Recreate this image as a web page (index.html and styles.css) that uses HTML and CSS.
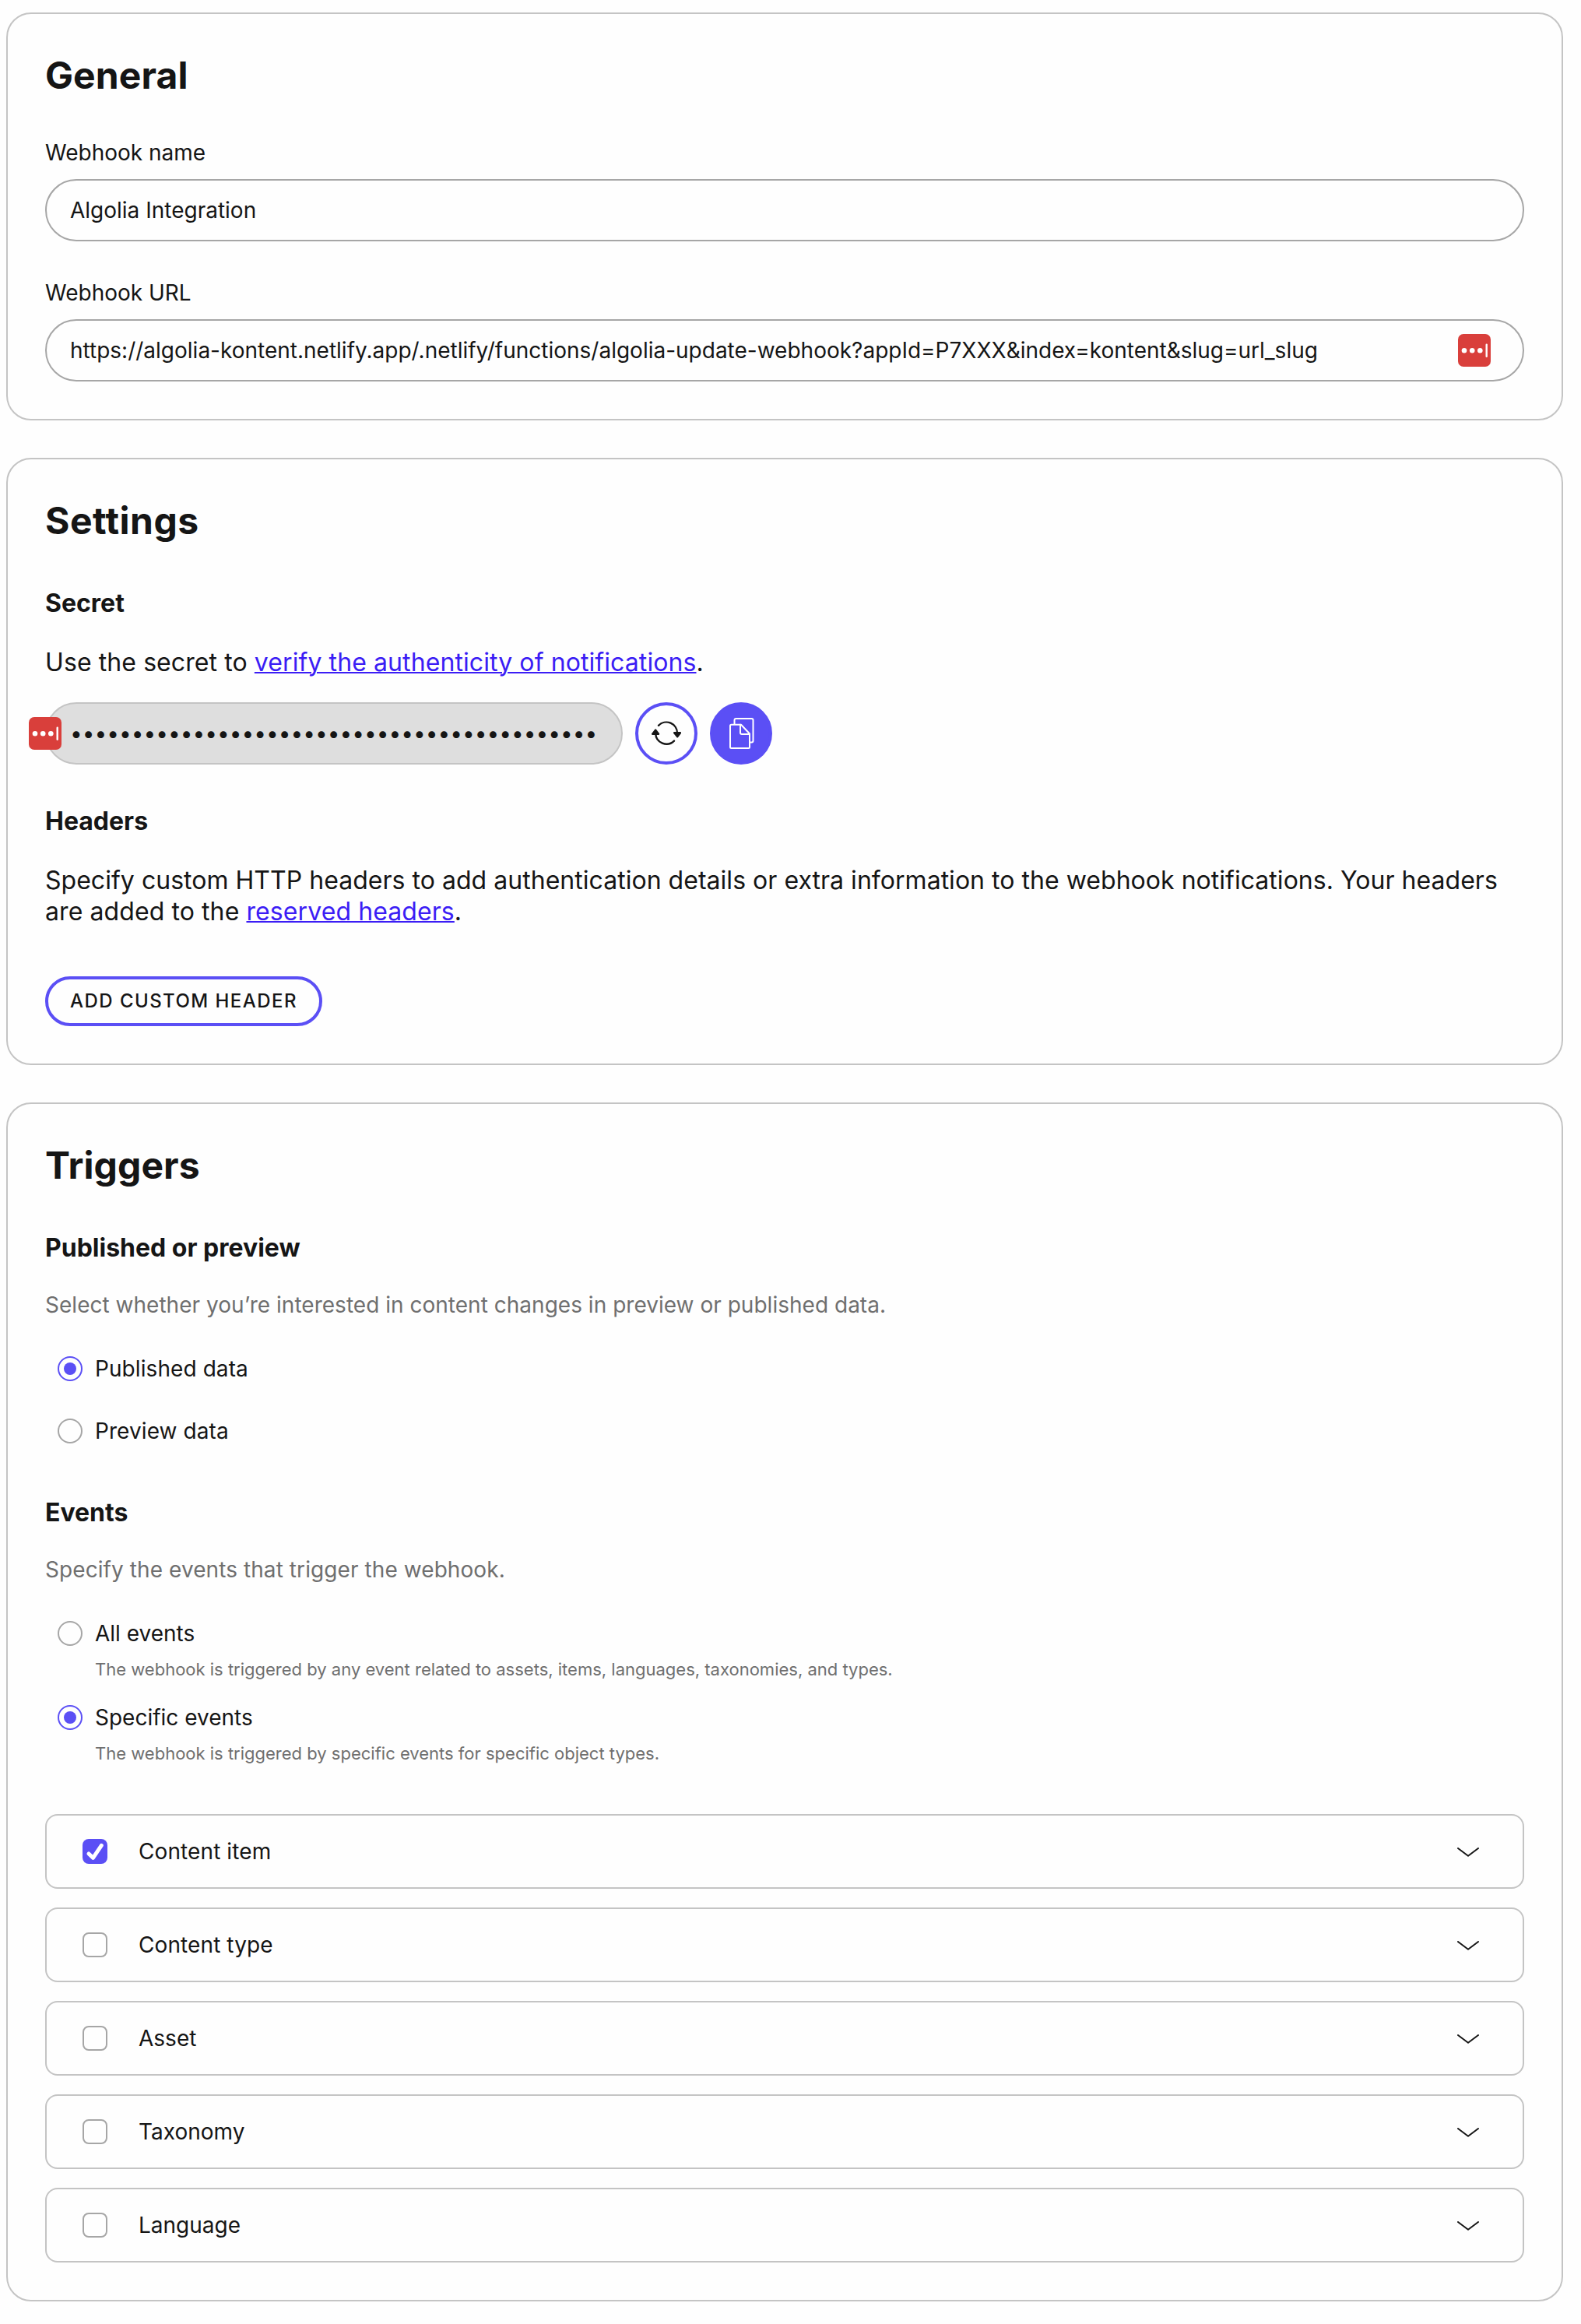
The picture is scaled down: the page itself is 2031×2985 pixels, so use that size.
FILE: index.html
```html
<!DOCTYPE html>
<html lang="en">
<head>
<meta charset="utf-8">
<title>Webhook settings</title>
<link rel="stylesheet" href="styles.css">
</head>
<body>
<svg class="defs" aria-hidden="true">
  <symbol id="pass" viewBox="0 0 42 42">
    <rect width="42" height="42" rx="7" fill="#d93f3b"/>
    <g fill="#fff"><circle cx="8" cy="21.3" r="3.3"/><circle cx="18.2" cy="21.3" r="3.3"/><circle cx="28.3" cy="21.3" r="3.3"/><rect x="35.5" y="12.5" width="2.4" height="17.5" rx="1.2"/></g>
  </symbol>
  <symbol id="chevron" viewBox="0 0 28 12">
    <path d="M1 1 14 10.8 27 1" fill="none" stroke="#151515" stroke-width="2" stroke-linecap="round" stroke-linejoin="round"/>
  </symbol>
</svg>
<main class="page">
  <section class="card">
    <h2 class="title">General</h2>
    <div class="field field-first">
      <div class="label">Webhook name</div>
      <div class="input"><span>Algolia Integration</span></div>
    </div>
    <div class="field">
      <div class="label">Webhook URL</div>
      <div class="input"><span>https://algolia-kontent.netlify.app/.netlify/functions/algolia-update-webhook?appId=P7XXX&amp;index=kontent&amp;slug=url_slug</span><svg class="pass"><use href="#pass"/></svg></div>
    </div>
  </section>

  <section class="card">
    <h2 class="title title-settings">Settings</h2>
    <h3 class="subtitle">Secret</h3>
    <p class="text text-short">Use the secret to <a class="link" href="#">verify the authenticity of notifications</a>.</p>
    <div class="secret-row">
      <div class="secret"><span class="dots">•••••••••••••••••••••••••••••••••••••••••••</span><svg class="pass pass-over"><use href="#pass"/></svg></div>
      <button class="round" aria-label="Regenerate">
        <svg width="38" height="32" viewBox="0 0 38 32" fill="none" stroke="#151515" stroke-width="2.4" stroke-linecap="round" stroke-linejoin="round">
          <path d="M9 5.8A14 14 0 0 1 33 16"/><path d="M29 25.6A14 14 0 0 1 5.200 16"/>
          <path d="M29.200 15.300H37L33.200 20.200Z" fill="#151515"/><path d="M1.200 16.700H9L5.200 11.600Z" fill="#151515"/>
        </svg>
      </button>
      <button class="round round-filled" aria-label="Copy">
        <svg width="34" height="42" viewBox="0 0 34 42" fill="none" stroke="#fff" stroke-width="2" stroke-linejoin="round" stroke-linecap="round">
          <path d="M7.500 9V4Q7.500 2 9.500 2H29.500Q31.500 2 31.500 4V30.500Q31.500 32.500 29.500 32.500H27"/>
          <path d="M16 9.700H3.500Q2 9.700 2 11.200V38.500Q2 40 3.500 40H25.500Q27 40 27 38.500V21.500Z"/>
          <path d="M15 9.700V20Q15 22 17 22H27"/>
        </svg>
      </button>
    </div>
    <h3 class="subtitle subtitle-headers">Headers</h3>
    <p class="text">Specify custom HTTP headers to add authentication details or extra information to the webhook notifications. Your headers<br><span class="text-short">are added to the <a class="link" href="#">reserved headers</a>.</span></p>
    <button class="pill">ADD CUSTOM HEADER</button>
  </section>

  <section class="card">
    <h2 class="title">Triggers</h2>
    <h3 class="subtitle">Published or preview</h3>
    <p class="desc">Select whether you’re interested in content changes in preview or published data.</p>
    <div class="radios radios-wide">
      <div class="option"><i class="radio on"></i><span>Published data</span></div>
      <div class="option"><i class="radio"></i><span>Preview data</span></div>
    </div>
    <h3 class="subtitle subtitle-events">Events</h3>
    <p class="desc desc-short">Specify the events that trigger the webhook.</p>
    <div class="radios">
      <div><div class="option"><i class="radio"></i><span>All events</span></div><p class="hint">The webhook is triggered by any event related to assets, items, languages, taxonomies, and types.</p></div>
      <div><div class="option"><i class="radio on"></i><span>Specific events</span></div><p class="hint">The webhook is triggered by specific events for specific object types.</p></div>
    </div>
    <div class="rows">
      <div class="row"><i class="check checked"><svg width="32" height="32" viewBox="0 0 32 32"><path d="M8 19 13.500 24.300 24.300 8.300" fill="none" stroke="#fff" stroke-width="5" stroke-linecap="round" stroke-linejoin="round"/></svg></i><span class="row-wide">Content item</span><svg class="chevron"><use href="#chevron"/></svg></div>
      <div class="row"><i class="check"></i><span class="row-wide">Content type</span><svg class="chevron"><use href="#chevron"/></svg></div>
      <div class="row"><i class="check"></i><span>Asset</span><svg class="chevron"><use href="#chevron"/></svg></div>
      <div class="row"><i class="check"></i><span>Taxonomy</span><svg class="chevron"><use href="#chevron"/></svg></div>
      <div class="row"><i class="check"></i><span>Language</span><svg class="chevron"><use href="#chevron"/></svg></div>
    </div>
  </section>
</main>
</body>
</html>
```
FILE: styles.css
```css
* { box-sizing: border-box; }
body { margin: 0; background: #fefefe; color: #151515; font: 400 28px/36px Inter, sans-serif; }
h2, h3, p { margin: 0; }
button { font: inherit; color: inherit; padding: 0; }
.defs { display: none; }
.page { width: 2016px; padding: 16px 8px 29px; display: flex; flex-direction: column; gap: 48px; }
.card { border: 2px solid #c4c4c4; border-radius: 32px; padding: 48px; }
.title { font-size: 48px; line-height: 62px; font-weight: 700; letter-spacing: 0.1px; }
.title-settings { letter-spacing: 0.5px; }
.subtitle { font-size: 32px; line-height: 42px; font-weight: 700; margin: 54px 0 34px; }
.subtitle-headers { margin-top: 52px; }
.subtitle-events { margin-top: 68px; }
.field { margin-top: 48px; }
.field-first { margin-top: 50px; }
.input { height: 80px; margin-top: 16px; padding: 0 41px 0 30px; border: 2px solid #a6a6a6; border-radius: 40px; display: flex; align-items: center; justify-content: space-between; }
.pass { width: 42px; height: 42px; }
.text { font-size: 32px; line-height: 40px; letter-spacing: 0.03px; padding-top: 1px; margin-bottom: -1px; }
.text-short { letter-spacing: 0.09px; }
.link { color: #3b1df5; text-decoration: underline; text-decoration-thickness: 2px; }
.secret-row { display: flex; gap: 16px; margin-top: 32px; }
.secret { position: relative; width: 742px; height: 80px; border: 2px solid #c4c4c4; border-radius: 40px; background: #dedede; padding-left: 30px; display: flex; align-items: center; }
.pass-over { position: absolute; left: -23px; top: 17px; }
.dots { white-space: nowrap; }
.round { width: 80px; height: 80px; border: 4px solid #5b4ff5; border-radius: 50%; background: #fefefe; display: flex; align-items: center; justify-content: center; }
.round-filled { background: #5b4ff5; padding-left: 2px; }
.text + .secret-row, .text + .pill { position: static; }
.pill { display: flex; align-items: center; justify-content: center; width: 356px; height: 64px; margin-top: 64px; border: 4px solid #5b4ff5; border-radius: 32px; background: #fefefe; font-size: 24px; font-weight: 500; letter-spacing: 1.45px; white-space: nowrap; }
.desc { color: #6f6f6f; letter-spacing: 0.02px; }
.desc-short { letter-spacing: 0.08px; }
.radios { margin: 48px 0 0 16px; display: flex; flex-direction: column; gap: 32px; }
.radios-wide { gap: 48px; letter-spacing: 0.08px; }
.option { height: 32px; display: flex; align-items: center; gap: 16px; }
.radio { width: 32px; height: 32px; border: 2px solid #a6a6a6; border-radius: 50%; display: flex; align-items: center; justify-content: center; }
.radio.on { border-color: #5b4ff5; }
.radio.on::after { content: ""; width: 16px; height: 16px; border-radius: 50%; background: #5b4ff5; }
.hint { margin: 16px 0 0 48px; font-size: 22px; line-height: 28px; color: #6f6f6f; }
.rows { margin-top: 64px; display: flex; flex-direction: column; gap: 24px; }
.row { height: 96px; border: 2px solid #c4c4c4; border-radius: 16px; padding: 0 56px 0 46px; display: flex; align-items: center; }
.row-wide { letter-spacing: 0.1px; }
.check { width: 32px; height: 32px; border: 2px solid #a6a6a6; border-radius: 8px; margin-right: 40px; }
.check.checked { border: 0; background: #5b4ff5; }
.check svg { display: block; }
.chevron { width: 28px; height: 12px; margin: 2px 0 0 auto; }
```
